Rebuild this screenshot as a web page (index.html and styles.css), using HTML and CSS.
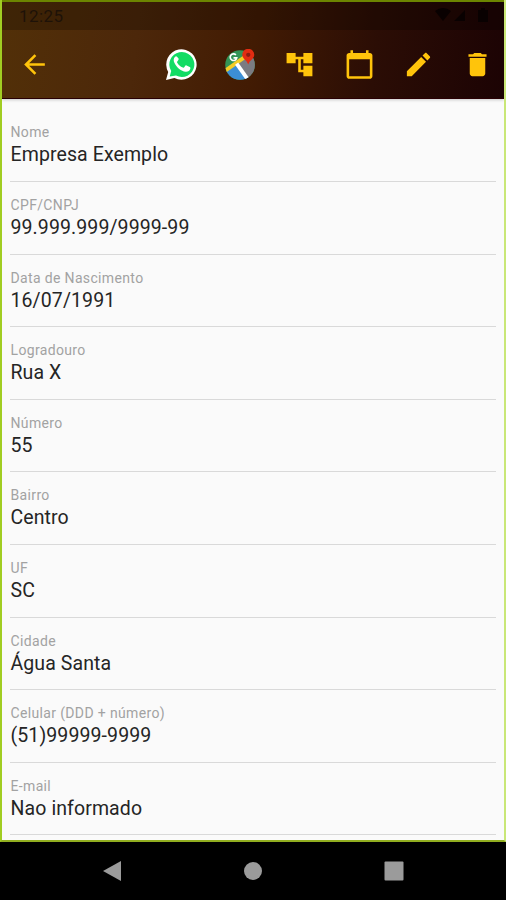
FILE: index.html
```
<!DOCTYPE html>
<html lang="pt-BR">
<head>
<meta charset="utf-8">
<title>Empresa Exemplo</title>
<link rel="stylesheet" href="styles.css">
</head>
<body>
<div class="screen">
  <header class="header">
    <div class="status"><span class="time">12:25</span>
      <svg class="signals" width="60" height="20" viewBox="0 0 60 20"><path d="M0 5Q8-1 16 5L8 15ZM19 15L30 4V15ZM43 4h3V2h4v2h3v12H43Z"/></svg>
    </div>
    <div class="toolbar">
      <svg class="icon back" viewBox="0 0 24 24"><path d="M20 11H7.83l5.59-5.59L12 4l-8 8 8 8 1.41-1.41L7.83 13H20v-2z"/></svg>
      <nav class="actions">
        <svg class="icon" viewBox="0 0 31 31"><path fill="#fff" d="M0 31l2.2-8A15.2 15.2 0 1 1 8.400 29z"/><path fill="#12dc64" d="M3.700 27.400l1.500-5.300a12.500 12.500 0 1 1 4.800 4.500z"/><path fill="#fff" d="M11 7.800c-.5-.8-1.200-.7-1.900-.1-1.600 1.500-1.900 3.700-.6 6.200 2.400 4.700 6.500 8.100 11.200 8.900 2.100.2 4.200-1.200 4.600-3 .3-1.200.1-1.500-.6-1.900l-3.200-1.500c-.5-.2-.8-.1-1.200.4l-1.300 1.600c-.4.4-.7.4-1.200.2-2.500-1.100-4.400-2.800-5.700-5.200-.2-.4-.1-.7.2-1l1.200-1.600c.3-.4.2-.8 0-1.200z"/></svg>
        <svg class="icon maps" viewBox="0 0 32 32"><defs><clipPath id="disc"><circle cx="15.500" cy="16.500" r="15.300"/></clipPath></defs><g clip-path="url(#disc)"><path fill="#349456" d="M0 0h32v32H0z"/><path fill="#7b7b82" d="M14 15L26 5h6v27H22z"/><path fill="#3c8ed5" d="M-1 25L13 15l11 17H0z"/><path stroke="#f4cd26" stroke-width="4" d="M-2 24L25 5"/><path stroke="#fff" stroke-width="4" d="M12 15l12 17"/></g><path fill="none" stroke="#fff" stroke-width="1.700" d="M11.300 6.200a3.400 3.400 0 1 0 .8 3H8.800"/><path fill="#e22c12" d="M17.800 6a6.200 6.200 0 1 1 12.400 0c0 4.200-4.600 5.300-6.200 10-1.600-4.700-6.200-5.800-6.200-10z"/><circle cx="24" cy="6" r="2.200" fill="#8d1c12"/></svg>
        <svg class="icon" viewBox="0 0 24 24"><path d="M22 11V3h-7v3H9V3H2v8h7V8h2v10h4v3h7v-8h-7v3h-2V8h2v3z"/></svg>
        <svg class="icon" viewBox="0 0 24 24"><path d="M20 3h-1V1h-2v2H7V1H5v2H4c-1.100 0-2 .9-2 2v16c0 1.100.9 2 2 2h16c1.100 0 2-.9 2-2V5c0-1.100-.9-2-2-2zm0 18H4V8h16v13z"/></svg>
        <svg class="icon" viewBox="0 0 24 24"><path d="M3 17.250V21h3.750L17.810 9.940l-3.750-3.750L3 17.250zM20.710 7.040c.39-.39.39-1.020 0-1.410l-2.340-2.340c-.39-.39-1.020-.39-1.410 0l-1.830 1.830 3.750 3.750 1.830-1.830z"/></svg>
        <svg class="icon" viewBox="0 0 24 24"><path d="M6 19c0 1.100.9 2 2 2h8c1.100 0 2-.9 2-2V7H6v12zM19 4h-3.500l-1-1h-5l-1 1H5v2h14V4z"/></svg>
      </nav>
    </div>
  </header>
  <main class="fields">
    <div class="field"><span class="label">Nome</span><span class="value">Empresa Exemplo</span></div>
    <div class="field"><span class="label">CPF/CNPJ</span><span class="value">99.999.999/9999-99</span></div>
    <div class="field"><span class="label">Data de Nascimento</span><span class="value">16/07/1991</span></div>
    <div class="field"><span class="label">Logradouro</span><span class="value">Rua X</span></div>
    <div class="field"><span class="label">Número</span><span class="value">55</span></div>
    <div class="field"><span class="label">Bairro</span><span class="value">Centro</span></div>
    <div class="field"><span class="label">UF</span><span class="value">SC</span></div>
    <div class="field"><span class="label">Cidade</span><span class="value">Água Santa</span></div>
    <div class="field"><span class="label">Celular (DDD + número)</span><span class="value">(51)99999-9999</span></div>
    <div class="field"><span class="label">E-mail</span><span class="value">Nao informado</span></div>
  </main>
</div>
<footer class="navbar">
  <svg width="20" height="22" viewBox="0 0 20 22"><path d="M1 11L19 1v20z"/></svg>
  <svg width="20" height="20" viewBox="0 0 20 20"><circle cx="10" cy="10" r="9"/></svg>
  <svg width="20" height="20" viewBox="0 0 20 20"><rect x=".5" y=".5" width="19" height="19" rx="1"/></svg>
</footer>
</body>
</html>
```
FILE: styles.css
```
* { box-sizing: border-box; }
body { margin: 0; width: 506px; height: 900px; background: #000; font-family: Roboto, sans-serif; overflow: hidden; }
.screen { height: 842px; background: #fafafa; border: 2px solid #a1cd22; border-right-color: #c9e777; border-bottom-color: #91ae20; border-top: 0; overflow: hidden; }
.header { height: 99px; border-top: 2px solid #6c8500; border-bottom: 1px solid #280004; background: linear-gradient(97deg, #523008 0%, #4c270a 27%, #421b03 50%, #2b0d05 74%, #1c0304 100%); box-shadow: 0 1px 3px #0003; }
.status { height: 28px; padding: 0 9px 0 17px; display: flex; justify-content: space-between; align-items: center; background: #0000003b; }
.time { color: #1e1208; font-size: 17px; font-weight: 400; letter-spacing: .4px; }
.signals { fill: #090101; }
.toolbar { height: 69px; padding: 0 11px 0 17px; display: flex; align-items: center; justify-content: space-between; }
.icon { display: block; width: 31px; height: 31px; fill: #ffc40b; }
.actions { display: flex; gap: 28.200px; align-items: center; }
.fields { padding: 10.400px 8px 0; }
.field { height: 72.600px; padding: 14px 0 0 .500px; border-bottom: 1px solid #d9d9d9; display: flex; flex-direction: column; }
.label { font-size: 14px; line-height: 18px; color: #a2a2a2; letter-spacing: .35px; white-space: nowrap; }
.value { font-size: 19.500px; line-height: 28px; color: #252525; letter-spacing: .1px; white-space: nowrap; }
.navbar { height: 58px; padding: 0 102.500px 0 102px; display: flex; align-items: center; justify-content: space-between; fill: #9b9b9b; }
```
